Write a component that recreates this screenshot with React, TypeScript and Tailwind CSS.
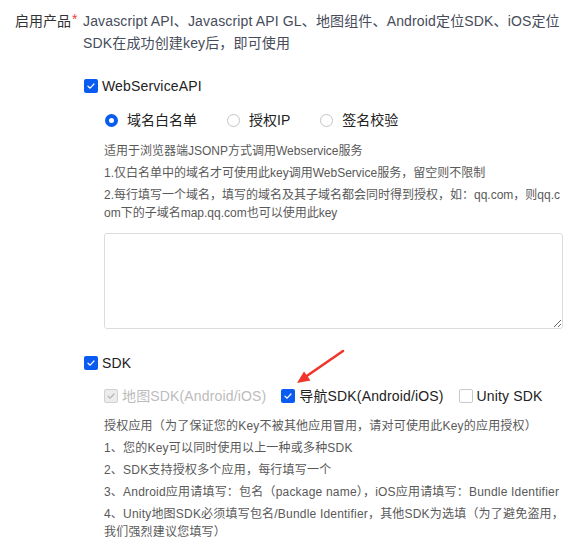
import React from 'react';

type BoxState = 'on' | 'off' | 'disabled';

const CheckBox = ({ state }: { state: BoxState }) => {
  if (state === 'off') {
    return <span className="w-[14px] h-[14px] shrink-0 rounded-[2px] border border-[#c9c9c9] bg-white" />;
  }
  const disabled = state === 'disabled';
  return (
    <span
      className={
        disabled
          ? 'w-[14px] h-[14px] shrink-0 rounded-[2px] border border-[#d0d0d0] bg-[#ececec] flex items-center justify-center'
          : 'w-[14px] h-[14px] shrink-0 rounded-[2px] bg-[#0a5bf0] flex items-center justify-center'
      }
    >
      <svg width="10" height="10" viewBox="0 0 10 10" fill="none">
        <path
          d="M2 5.2 L4.1 7.2 L8 3"
          stroke={disabled ? '#b5b5b5' : '#ffffff'}
          strokeWidth="1.2"
          strokeLinecap="round"
          strokeLinejoin="round"
        />
      </svg>
    </span>
  );
};

const CheckItem = ({ state, label, className = '' }: { state: BoxState; label: string; className?: string }) => (
  <label className={`flex items-center h-[22px] gap-[4px] ${className}`}>
    <CheckBox state={state} />
    <span className={`text-[14px] leading-[22px] tracking-[0.15px] ${state === 'disabled' ? 'text-[#bcbcbc]' : 'text-[#222]'}`}>
      {label}
    </span>
  </label>
);

const Radio = ({ checked, label }: { checked?: boolean; label: string }) => (
  <label className="flex items-center h-[22px] gap-[9px]">
    <span
      className={
        checked
          ? 'w-[13px] h-[13px] rounded-full border-[4px] border-[#0a5bf0] bg-white'
          : 'w-[13px] h-[13px] rounded-full border border-[#c4c4c4] bg-white'
      }
    />
    <span className="text-[14px] leading-[22px] text-[#222]">{label}</span>
  </label>
);

const Help = ({ children }: { children: React.ReactNode }) => (
  <p className="text-[12px] leading-[18px] text-[#595959] mb-[4px] whitespace-nowrap">{children}</p>
);

export default function App() {
  return (
    <div
      className="relative w-[584px] h-[549px] overflow-hidden bg-white"
      style={{ fontFamily: '"Liberation Sans", "Noto Sans CJK SC", sans-serif' }}
    >
      <div className="flex pt-[10px]">
        <div className="w-[83px] shrink-0 pl-[15px] text-[14px] leading-[22px] text-[#333] whitespace-nowrap">
          启用产品<span className="text-[#e8453c] relative -top-[2px] ml-[1px]">*</span>
        </div>

        <div className="flex-1 pr-[21px]">
          <p className="text-[14px] leading-[22px] text-[#464c5a] whitespace-nowrap tracking-[0.15px]">
            Javascript API、Javascript API GL、地图组件、Android定位SDK、iOS定位
            <br />
            SDK在成功创建key后，即可使用
          </p>

          <CheckItem state="on" label="WebServiceAPI" className="mt-[21px] pl-[1px]" />

          <div className="pl-[21px]">
            <div className="flex items-center gap-[30px] mt-[12px] pl-[1px]">
              <Radio checked label="域名白名单" />
              <Radio label="授权IP" />
              <Radio label="签名校验" />
            </div>

            <div className="mt-[11px]">
              <Help>适用于浏览器端JSONP方式调用Webservice服务</Help>
              <Help>1.仅白名单中的域名才可使用此key调用WebService服务，留空则不限制</Help>
              <Help>
                2.每行填写一个域名，填写的域名及其子域名都会同时得到授权，如：qq.com，则qq.c
                <br />
                om下的子域名map.qq.com也可以使用此key
              </Help>
            </div>

            <textarea className="block w-[459px] h-[96px] mt-[11px] rounded-[3px] border border-[#dcdcdc] outline-none" />
          </div>

          <CheckItem state="on" label="SDK" className="mt-[23px] pl-[1px]" />

          <div className="pl-[21px]">
            <div className="flex items-center gap-[15px] mt-[11px]">
              <CheckItem state="disabled" label="地图SDK(Android/iOS)" />
              <CheckItem state="on" label="导航SDK(Android/iOS)" />
              <CheckItem state="off" label="Unity SDK" />
            </div>

            <div className="mt-[10px] tracking-[0.2px]">
              <Help>授权应用（为了保证您的Key不被其他应用冒用，请对可使用此Key的应用授权）</Help>
              <Help>1、您的Key可以同时使用以上一种或多种SDK</Help>
              <Help>2、SDK支持授权多个应用，每行填写一个</Help>
              <Help>3、Android应用请填写：包名（package name），iOS应用请填写：Bundle Identifier</Help>
              <Help>
                4、Unity地图SDK必须填写包名/Bundle Identifier，其他SDK为选填（为了避免盗用，
                <br />
                我们强烈建议您填写）
              </Help>
            </div>
          </div>
        </div>
      </div>

      {/* red annotation arrow */}
      <svg className="absolute left-[290px] top-[345px]" width="60" height="45" viewBox="0 0 60 45" fill="none">
        <line x1="53" y1="6" x2="16" y2="31.5" stroke="#f0352b" strokeWidth="2.6" strokeLinecap="round" />
        <polygon points="7,38 20.5,35.5 14,26.5" fill="#f0352b" />
      </svg>
    </div>
  );
}
